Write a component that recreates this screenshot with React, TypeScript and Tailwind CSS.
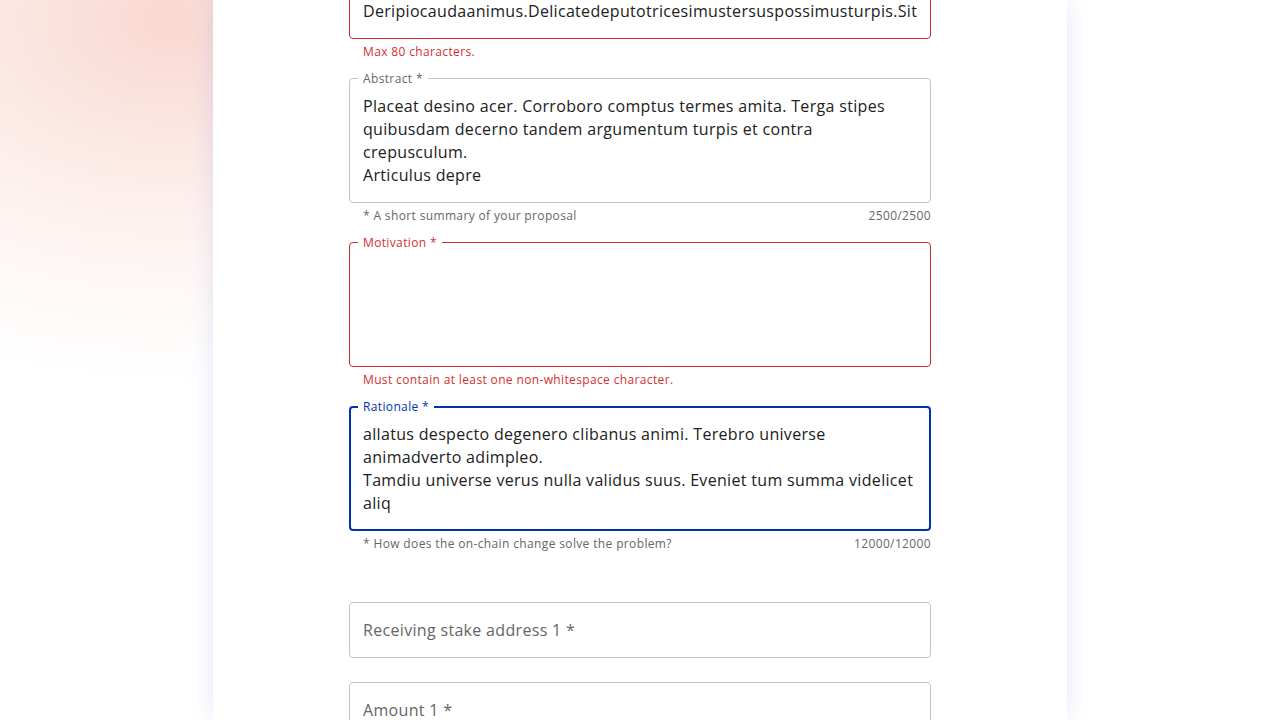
import React from 'react';

const font = { fontFamily: '"Open Sans", "Noto Sans", sans-serif' };

interface FieldProps {
    label: string;
    lines?: string[];
    rows?: number;
    state?: 'default' | 'error' | 'focused';
    helper?: string;
    counter?: string;
    helperError?: boolean;
}

const NotchedField = ({ label, lines = [], rows = 1, state = 'default', helper, counter, helperError }: FieldProps) => {
    const focused = state === 'focused';
    const border =
        state === 'error' ? 'border border-[#d32f2f]' : focused ? 'border-2 border-[#0033ad]' : 'border border-[#c4c4c4]';
    const labelColor = state === 'error' ? 'text-[#d32f2f]' : focused ? 'text-[#0033ad]' : 'text-[#666666]';
    const pad = focused ? 'px-[12px] py-[14.5px]' : 'px-[13px] py-[15.5px]';
    const labelPos = focused ? '-top-[10px] left-[7px]' : '-top-[9px] left-[8px]';
    // outer box is rows*23 + 33px tall, border included
    const inner = rows * 23 + 33 - (focused ? 4 : 2);

    return (
        <div className="flex flex-col">
            <div className={`relative rounded ${border}`}>
                <span className={`absolute ${labelPos} bg-white px-[5px] text-xs leading-[18px] tracking-[0.03em] ${labelColor}`}>{label}</span>
                <div className={`${pad} text-base leading-[23px] tracking-[0.02em] text-[#212121]`} style={{ height: inner }}>
                    <div className="h-full overflow-hidden">
                        {lines.map((l, i) => (
                            <div key={i} className="whitespace-nowrap">{l}</div>
                        ))}
                    </div>
                </div>
            </div>
            {(helper || counter) && (
                <div className={`mt-[3px] flex justify-between pl-[14px] text-xs leading-[20px] tracking-[0.03em] ${helperError ? 'text-[#d32f2f]' : 'text-[#666666]'}`}>
                    <span>{helper}</span>
                    {counter && <span>{counter}</span>}
                </div>
            )}
        </div>
    );
};

const PlainField = ({ placeholder }: { placeholder: string }) => (
    <div className="h-[56px] rounded border border-[#c4c4c4] pl-[13px] flex items-center">
        <span className="text-base leading-[23px] tracking-[0.02em] text-[#666666]">{placeholder}</span>
    </div>
);

export default function App() {
    return (
        <div
            className="relative h-[720px] overflow-hidden bg-white bg-[radial-gradient(ellipse_520px_360px_at_170px_20px,rgba(249,214,206,0.95),rgba(252,234,230,0.65)_55%,rgba(255,255,255,0)_100%)]"
            style={font}
        >
            <div className="flex justify-center">
                <div className="w-[854px] h-[720px] bg-white shadow-[0_0_22px_rgba(110,120,230,0.18)]">
                    <div className="mx-auto w-[582px] -mt-[17px] flex flex-col gap-4">
                        <NotchedField
                            label="Title *"
                            rows={1}
                            state="error"
                            lines={['Deripiocaudaanimus.Delicatedeputotricesimustersuspossimusturpis.Sit']}
                            helper="Max 80 characters."
                            helperError
                        />
                        <NotchedField
                            label="Abstract *"
                            rows={4}
                            lines={[
                                'Placeat desino acer. Corroboro comptus termes amita. Terga stipes',
                                'quibusdam decerno tandem argumentum turpis et contra',
                                'crepusculum.',
                                'Articulus depre',
                            ]}
                            helper="* A short summary of your proposal"
                            counter="2500/2500"
                        />
                        <NotchedField
                            label="Motivation *"
                            rows={4}
                            state="error"
                            helper="Must contain at least one non-whitespace character."
                            helperError
                        />
                        <NotchedField
                            label="Rationale *"
                            rows={4}
                            state="focused"
                            lines={[
                                'allatus despecto degenero clibanus animi. Terebro universe',
                                'animadverto adimpleo.',
                                'Tamdiu universe verus nulla validus suus. Eveniet tum summa videlicet',
                                'aliq',
                            ]}
                            helper="* How does the on-chain change solve the problem?"
                            counter="12000/12000"
                        />
                        <div className="mt-8 flex flex-col gap-6">
                            <PlainField placeholder="Receiving stake address 1 *" />
                            <PlainField placeholder="Amount 1 *" />
                        </div>
                    </div>
                </div>
            </div>
        </div>
    );
}
